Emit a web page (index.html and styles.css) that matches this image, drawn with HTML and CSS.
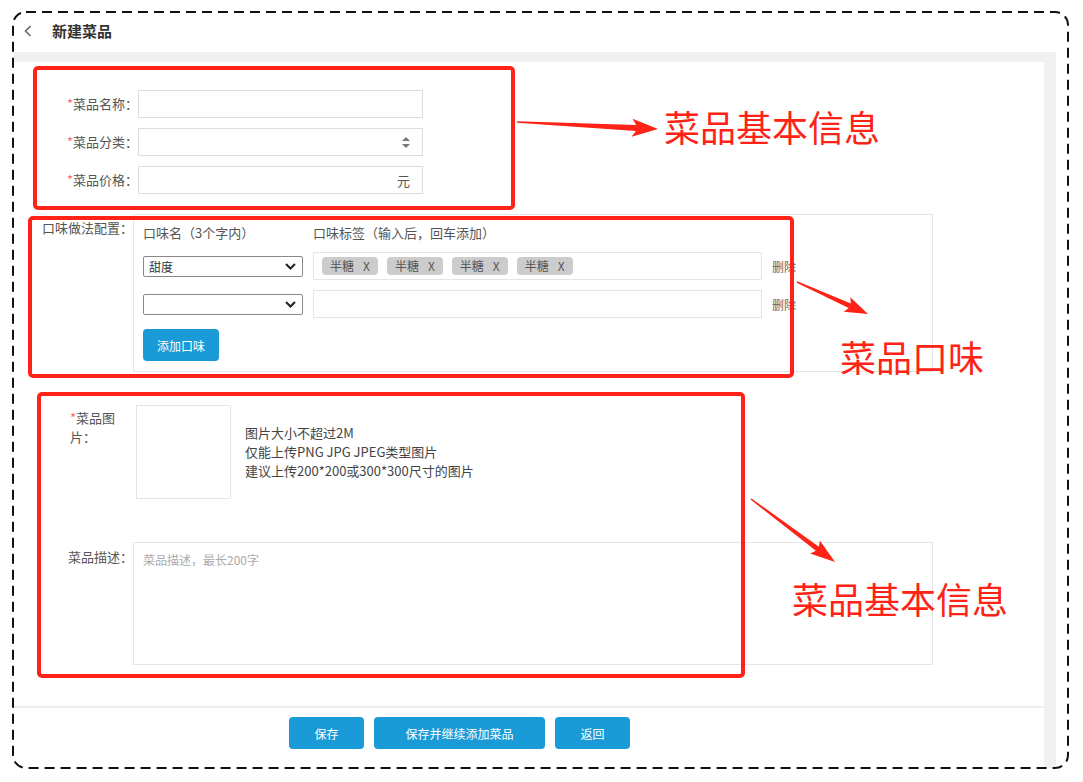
FILE: index.html
```html
<!DOCTYPE html>
<html lang="zh-CN">

<head>
    <meta charset="UTF-8">
    <meta name="viewport" content="width=device-width, initial-scale=1.0">
    <title>新建菜品</title>
    <link rel="stylesheet" href="styles.css">
</head>

<body>
    <div class="frame">
        <div class="topbar">
            <svg class="back" width="8" height="12" viewBox="0 0 8 12">
                <path d="M6.5 1 L1.5 6 L6.5 11" fill="none" stroke="#666" stroke-width="1.6" />
            </svg>
            <span class="title">新建菜品</span>
        </div>

        <div class="main">
            <div class="panel">
                <div class="form">
                    <div class="row">
                        <label class="label"><i class="req">*</i>菜品名称：</label>
                        <div class="input"></div>
                    </div>
                    <div class="row">
                        <label class="label"><i class="req">*</i>菜品分类：</label>
                        <div class="input">
                            <svg width="8" height="11" viewBox="0 0 8 11">
                                <path d="M4 0 L8 4 L0 4 Z M4 11 L8 7 L0 7 Z" fill="#777" />
                            </svg>
                        </div>
                    </div>
                    <div class="row">
                        <label class="label"><i class="req">*</i>菜品价格：</label>
                        <div class="input"><span class="unit">元</span></div>
                    </div>

                    <!-- 口味 -->
                    <div class="row taste-row">
                        <label class="label label-taste">口味做法配置：</label>
                        <div class="taste-box">
                            <div class="taste-head">
                                <span class="col-name">口味名（3个字内）</span>
                                <span>口味标签（输入后，回车添加）</span>
                            </div>
                            <div class="taste-line">
                                <div class="pick">
                                    <span>甜度</span>
                                    <svg width="11" height="7" viewBox="0 0 11 7">
                                        <path d="M1 1 L5.5 5.5 L10 1" fill="none" stroke="#222" stroke-width="2" />
                                    </svg>
                                </div>
                                <div class="tags">
                                    <span class="tag">半糖<b>X</b></span>
                                    <span class="tag">半糖<b>X</b></span>
                                    <span class="tag">半糖<b>X</b></span>
                                    <span class="tag">半糖<b>X</b></span>
                                </div>
                                <span class="del">删除</span>
                            </div>
                            <div class="taste-line">
                                <div class="pick">
                                    <span></span>
                                    <svg width="11" height="7" viewBox="0 0 11 7">
                                        <path d="M1 1 L5.5 5.5 L10 1" fill="none" stroke="#222" stroke-width="2" />
                                    </svg>
                                </div>
                                <div class="tags"></div>
                                <span class="del">删除</span>
                            </div>
                            <button class="btn btn-add">添加口味</button>
                        </div>
                    </div>

                    <!-- 图片 -->
                    <div class="row pic-row">
                        <label class="label label-pic"><i class="req">*</i>菜品图片：</label>
                        <div class="upload"></div>
                        <div class="hint">
                            图片大小不超过2M<br>
                            仅能上传PNG JPG JPEG类型图片<br>
                            建议上传200*200或300*300尺寸的图片
                        </div>
                    </div>
                    <div class="row desc-row">
                        <label class="label label-desc">菜品描述：</label>
                        <textarea class="desc" placeholder="菜品描述，最长200字"></textarea>
                    </div>
                </div>

                <div class="footer">
                    <button class="btn btn-save">保存</button>
                    <button class="btn btn-more">保存并继续添加菜品</button>
                    <button class="btn btn-save">返回</button>
                </div>
            </div>
        </div>
    </div>

    <!-- 标注 -->
    <div class="mark mark-base"></div>
    <div class="mark mark-taste"></div>
    <div class="mark mark-media"></div>

    <svg class="arrows" width="1083" height="782" viewBox="0 0 1083 782">
        <rect class="dash" x="13" y="12" width="1055" height="756" rx="13" />
        <polygon points="517,121.2 636.2,124.9 632.5,118.7 658,129 631.6,136.7 635.9,130.9 517,122.8" />
        <polygon points="797.3,281.3 850.8,303.5 850.3,297.3 868,314 843.7,311.8 848.7,308.1 796.7,282.7" />
        <polygon points="751.5,498.4 818.9,546.8 819.8,540.6 835,562 810.2,553.4 815.9,550.8 750.5,499.6" />
    </svg>

    <div class="note note-base">菜品基本信息</div>
    <div class="note note-taste">菜品口味</div>
    <div class="note note-media">菜品基本信息</div>
</body>

</html>
```

FILE: styles.css
```css
* {
    box-sizing: border-box;
}

body {
    margin: 0;
    position: relative;
    width: 1083px;
    height: 782px;
    overflow: hidden;
    background: #fff;
    font-family: "Noto Sans CJK SC", sans-serif;
    font-size: 13px;
    color: #555;
}

.frame {
    margin: 11px 0 0 12px;
    width: 1057px;
    height: 759px;
    border: 2px solid transparent;
    border-radius: 12px;
    overflow: hidden;
    display: flex;
    flex-direction: column;
}

.topbar {
    flex: none;
    height: 39px;
    display: flex;
    align-items: center;
    padding: 0 0 4px 10px;
}

.back {
    margin-right: 20px;
}

.title {
    font-size: 15px;
    font-weight: bold;
    color: #333;
}

.main {
    flex: 1;
    display: flex;
    background: #f0f0f0;
    margin-right: 11px;
    padding: 10px 12px 0 0;
}

.panel {
    flex: 1;
    background: #fff;
    display: flex;
    flex-direction: column;
}

.form {
    padding-top: 28px;
}

.row {
    display: flex;
    align-items: flex-start;
    margin-bottom: 10px;
}

.row:last-child {
    margin-bottom: 0;
}

.label {
    flex: none;
    width: 124px;
    text-align: right;
    line-height: 28px;
    white-space: nowrap;
}

.req {
    font-style: normal;
    color: #f56c6c;
}

.input {
    width: 285px;
    height: 28px;
    border: 1px solid #ddd;
    display: flex;
    align-items: center;
    justify-content: flex-end;
    padding-right: 12px;
}

.unit {
    color: #555;
}

/* 口味 */
.taste-row {
    margin-top: 20px;
}

.label-taste {
    width: 119px;
    line-height: 20px;
    padding-top: 4px;
}

.taste-box {
    width: 800px;
    border: 1px solid #e5e5e5;
    padding: 9px 10px 10px 9px;
}

.taste-head {
    display: flex;
    line-height: 18px;
}

.col-name {
    width: 170px;
}

.taste-line {
    display: flex;
    align-items: center;
    height: 28px;
    margin-top: 10px;
}

.pick {
    flex: none;
    width: 160px;
    height: 21px;
    margin-right: 10px;
    border: 1px solid #888;
    border-radius: 2px;
    display: flex;
    align-items: center;
    justify-content: space-between;
    padding: 0 6px 0 5px;
    font-size: 12px;
    color: #333;
}

.tags {
    flex: none;
    width: 449px;
    height: 28px;
    border: 1px solid #e5e5e5;
    display: flex;
    align-items: center;
    gap: 9px;
    padding-left: 8px;
}

.tag {
    height: 18px;
    line-height: 18px;
    padding: 0 8px;
    border-radius: 4px;
    background: #ccc;
    font-size: 12px;
    color: #555;
}

.tag b {
    font-weight: normal;
    margin-left: 9px;
}

.del {
    margin-left: 10px;
    font-size: 12px;
    color: #666;
}

.btn {
    border: none;
    padding: 0;
    height: 32px;
    border-radius: 4px;
    background: #1a9bd7;
    color: #fff;
    font-family: inherit;
    font-size: 12px;
}

.btn-add {
    display: block;
    width: 76px;
    margin-top: 11px;
}

/* 图片 + 描述 */
.pic-row {
    margin-top: 33px;
}

.label-pic {
    width: 48px;
    margin: 3px 18px 0 56px;
    text-align: left;
    line-height: 19px;
    white-space: normal;
}

.upload {
    flex: none;
    width: 95px;
    height: 94px;
    border: 1px solid #e5e5e5;
}

.hint {
    margin: 18px 0 0 14px;
    line-height: 19px;
    color: #444;
}

.desc-row {
    margin-top: 43px;
}

.label-desc {
    width: 119px;
    line-height: 20px;
    padding-top: 5px;
}

.desc {
    width: 800px;
    height: 123px;
    border: 1px solid #e5e5e5;
    padding: 8px 9px;
    resize: none;
    outline: none;
    font-family: inherit;
    font-size: 12px;
    line-height: 18px;
}

.desc::placeholder {
    color: #aaa;
}

.footer {
    margin-top: 41px;
    border-top: 2px solid #eee;
    padding: 9px 0 0 275px;
    display: flex;
    gap: 10px;
}

.btn-save {
    width: 75px;
}

.btn-more {
    width: 171px;
}

/* 标注 */
.mark {
    position: absolute;
    border: 4px solid #ff2216;
    border-radius: 5px;
}

.mark-base {
    left: 33px;
    top: 66px;
    width: 482px;
    height: 144px;
}

.mark-taste {
    left: 28px;
    top: 216px;
    width: 766px;
    height: 162px;
}

.mark-media {
    left: 37px;
    top: 392px;
    width: 708px;
    height: 286px;
}

.arrows {
    position: absolute;
    left: 0;
    top: 0;
    pointer-events: none;
    fill: #ff2216;
}

.arrows .dash {
    fill: none;
    stroke: #111;
    stroke-width: 2;
    stroke-dasharray: 10 6;
}

.note {
    position: absolute;
    font-size: 36px;
    line-height: 36px;
    color: #ff2216;
    white-space: nowrap;
}

.note-base {
    left: 664px;
    top: 108px;
}

.note-taste {
    left: 840px;
    top: 338px;
}

.note-media {
    left: 792px;
    top: 580px;
}
```
